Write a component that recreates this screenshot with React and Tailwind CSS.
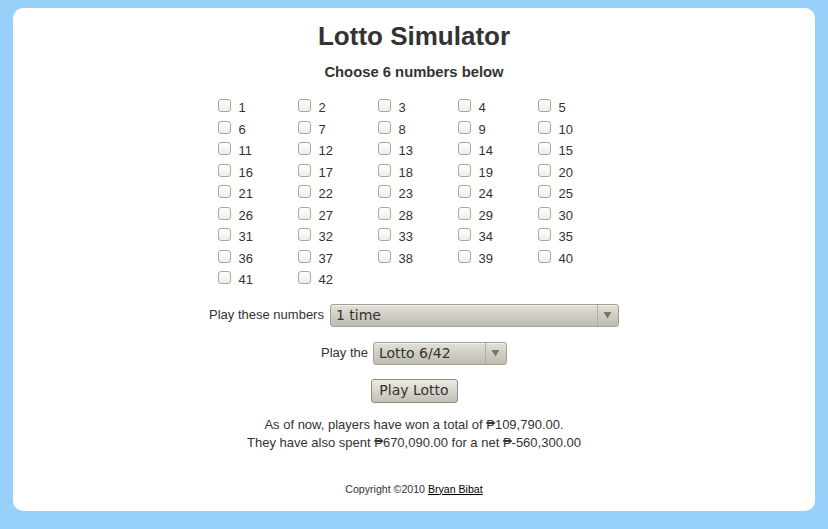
import React, { useState } from "react";

const NUMBERS = Array.from({ length: 42 }, (_, i) => i + 1);

function Select({ value, width, options }) {
  return (
    <div
      className={`relative flex h-[23px] ${width} items-center rounded-[3px] border border-[#a19e93] bg-gradient-to-b from-[#e2e0d8] to-[#bfbcb0] shadow-[inset_0_1px_0_#f2f1ec]`}
    >
      <select
        defaultValue={value}
        className="h-full min-w-0 flex-1 appearance-none bg-transparent pl-[5px] text-[14px] text-[#333] outline-none font-['DejaVu_Sans',sans-serif]"
      >
        {options.map((o) => (
          <option key={o}>{o}</option>
        ))}
      </select>
      <div className="pointer-events-none flex h-full w-[21px] shrink-0 items-center justify-center border-l border-[#b0ada2]">
        <svg width="9" height="8" viewBox="0 0 9 8">
          <path d="M0.5 1 L8.5 1 L4.5 7.5 Z" fill="#77746b" />
        </svg>
      </div>
    </div>
  );
}

export default function App() {
  const [picked, setPicked] = useState([]);

  const toggle = (n) =>
    setPicked((p) => (p.includes(n) ? p.filter((x) => x !== n) : [...p, n]));

  return (
    <div className="min-h-[529px] bg-[#97d0f8] px-[13px] pt-[8px] font-['Liberation_Sans',Arial,sans-serif] text-[#333]">
      <div className="flex h-[503px] flex-col items-center rounded-[10px] bg-white pt-[13px]">
        <h1 className="text-[26px] font-bold leading-[30px] text-[#333]">Lotto Simulator</h1>
        <h2 className="mt-[12px] text-[14.8px] font-bold leading-[18px] text-[#333]">
          Choose 6 numbers below
        </h2>

        <div className="ml-[1px] mt-[14px] grid w-[400px] grid-cols-5">
          {NUMBERS.map((n) => (
            <label key={n} className="flex h-[21.5px] items-center gap-[8px] pl-[3px] text-[13px]">
              <input
                type="checkbox"
                checked={picked.includes(n)}
                onChange={() => toggle(n)}
                className="h-[13px] w-[13px] appearance-none rounded-[3px] border border-[#a9a69c] bg-gradient-to-b from-white to-[#eeede8] checked:bg-[#888]"
              />
              <span className="translate-y-[2px] text-[#333]">{n}</span>
            </label>
          ))}
        </div>

        <div className="mt-[15px] flex items-center gap-[6px] text-[13px]">
          <span>Play these numbers</span>
          <Select value="1 time" width="w-[289px]" options={["1 time", "10 times", "100 times", "1000 times"]} />
        </div>

        <div className="mt-[15px] flex items-center gap-[5px] text-[13px]">
          <span>Play the</span>
          <Select value="Lotto 6/42" width="w-[134px]" options={["Lotto 6/42", "Mega Lotto 6/45", "Super Lotto 6/49"]} />
        </div>

        <button className="mt-[14px] h-[24px] w-[87px] rounded-[3px] border border-[#8f8c80] bg-gradient-to-b from-[#eceae3] to-[#c3c0b4] text-[14px] text-[#333] font-['DejaVu_Sans',sans-serif]">
          Play Lotto
        </button>

        <div className="mt-[13px] text-center text-[13px] leading-[18px]">
          <p>As of now, players have won a total of ₱109,790.00.</p>
          <p>They have also spent ₱670,090.00 for a net ₱-560,300.00</p>
        </div>

        <p className="mt-[30px] text-[10.6px]">
          Copyright ©2010{" "}
          <a href="#" className="text-black underline">
            Bryan Bibat
          </a>
        </p>
      </div>
    </div>
  );
}
